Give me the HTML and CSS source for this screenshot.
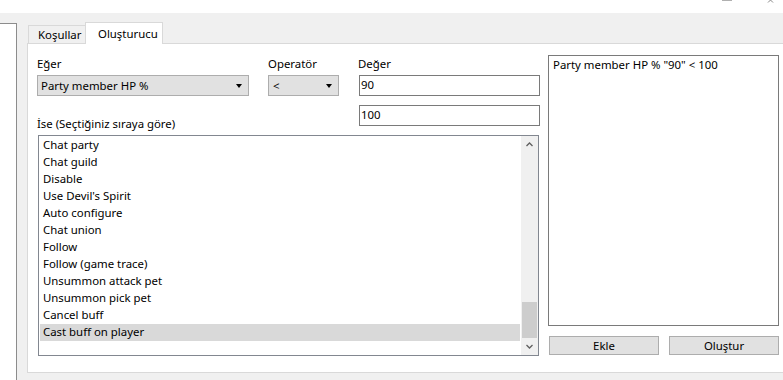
FILE: index.html
```html
<!DOCTYPE html>
<html lang="tr">

<head>
    <meta charset="UTF-8">
    <meta name="viewport" content="width=device-width, initial-scale=1.0">
    <title>Oluşturucu</title>
    <link rel="stylesheet" href="styles.css">
</head>

<body>
    <div class="titlebar">
        <svg class="winctl" width="64" height="13" viewBox="0 0 64 13">
            <rect x="5.5" y="-8.5" width="9" height="9" fill="none" stroke="#b0b0b0" />
            <path d="M51 2.5 L53.5 0 M56 2.5 L53.5 0" stroke="#8a8a8a" stroke-width="1" fill="none" />
        </svg>
    </div>

    <div class="frame">
        <div class="sidebar"></div>

        <div class="tabs">
            <div class="tabstrip">
                <div class="tab">Koşullar</div>
                <div class="tab active">Oluşturucu</div>
            </div>

            <div class="panel">
                <div class="left">
                    <div class="form-grid">
                        <label class="lbl lbl-if">Eğer</label>
                        <label class="lbl lbl-op">Operatör</label>
                        <label class="lbl lbl-val">Değer</label>

                        <div class="combo combo-if">
                            <span>Party member HP %</span>
                            <i class="caret"></i>
                        </div>
                        <div class="combo combo-op">
                            <span>&lt;</span>
                            <i class="caret"></i>
                        </div>
                        <div class="textbox tb-1">90</div>

                        <label class="lbl lbl-then">İse (Seçtiğiniz sıraya göre)</label>
                        <div class="textbox tb-2">100</div>
                    </div>

                    <div class="listbox">
                        <ul class="items">
                            <li>Chat party</li>
                            <li>Chat guild</li>
                            <li>Disable</li>
                            <li>Use Devil's Spirit</li>
                            <li>Auto configure</li>
                            <li>Chat union</li>
                            <li>Follow</li>
                            <li>Follow (game trace)</li>
                            <li>Unsummon attack pet</li>
                            <li>Unsummon pick pet</li>
                            <li>Cancel buff</li>
                            <li class="selected">Cast buff on player</li>
                        </ul>
                        <div class="scrollbar">
                            <div class="sb-btn">
                                <svg width="7" height="5" viewBox="0 0 7 5"><path d="M0.5 4 L3.5 1 L6.5 4" fill="none" stroke="#606060" stroke-width="1.3" /></svg>
                            </div>
                            <div class="sb-track"><div class="sb-thumb"></div></div>
                            <div class="sb-btn">
                                <svg width="7" height="5" viewBox="0 0 7 5"><path d="M0.5 1 L3.5 4 L6.5 1" fill="none" stroke="#606060" stroke-width="1.3" /></svg>
                            </div>
                        </div>
                    </div>
                </div>

                <div class="right">
                    <div class="output">Party member HP % "90" &lt; 100</div>
                    <div class="buttons">
                        <button class="btn">Ekle</button>
                        <button class="btn">Oluştur</button>
                    </div>
                </div>
            </div>
        </div>
    </div>
</body>

</html>
```

FILE: styles.css
```css
* {
    margin: 0;
    padding: 0;
    box-sizing: border-box;
}

body {
    width: 783px;
    height: 380px;
    overflow: hidden;
    background-color: #f0f0f0;
    color: #000;
    font-family: "Noto Sans", "Open Sans", Arial, sans-serif;
    font-size: 11.4px;
    line-height: 16px;
}

.titlebar {
    height: 13px;
    background-color: #fff;
    display: flex;
    justify-content: flex-end;
}

.winctl {
    display: block;
    margin-right: 2px;
}

.frame {
    display: flex;
    height: 367px;
}

.sidebar {
    flex: none;
    width: 17px;
    margin-top: 10px;
    background-color: #fff;
    border-top: 1px solid #8c8c8c;
    border-right: 1px solid #8c8c8c;
}

.tabs {
    flex: none;
    width: 790px;
    margin-left: 10px;
}

/* tab headers */
.tabstrip {
    height: 30px;
    display: flex;
    align-items: flex-end;
    padding-left: 1px;
}

.tab {
    height: 18px;
    width: 58px;
    padding: 1px 0 0 9px;
    background-color: #f0f0f0;
    border: 1px solid #d9d9d9;
    border-bottom: none;
    white-space: nowrap;
}

.tab.active {
    position: relative;
    z-index: 1;
    height: 22px;
    width: 78px;
    margin-left: -1px;
    margin-bottom: -1px;
    padding: 3px 0 0 12px;
    background-color: #fff;
}

.panel {
    height: 330px;
    display: flex;
    padding: 11px 0 0 9px;
    background-color: #fff;
    border: 1px solid #d9d9d9;
}

/* left part: fields and action list */
.left {
    width: 502px;
    margin-top: 1px;
}

.form-grid {
    display: grid;
    grid-template-columns: 212px 71px 182px;
    grid-template-rows: 16px 24px 36px;
}

.lbl {
    display: block;
    white-space: nowrap;
}

.lbl-if {
    grid-column: 1;
}

.lbl-op {
    grid-column: 2;
    margin-left: 19px;
}

.lbl-val {
    grid-column: 3;
    margin-left: 38px;
}

.combo {
    height: 21px;
    margin-top: 3px;
    display: flex;
    align-items: center;
    justify-content: space-between;
    background-color: #e1e1e1;
    border: 1px solid #adadad;
    padding: 0 6px 0 3px;
}

.combo-if {
    grid-column: 1;
    grid-row: 2;
}

.combo-op {
    grid-column: 2;
    grid-row: 2;
    margin-left: 19px;
    width: 71px;
    padding-left: 4px;
}

.caret {
    width: 0;
    height: 0;
    border-left: 3.5px solid transparent;
    border-right: 3.5px solid transparent;
    border-top: 4px solid #000;
}

.textbox {
    height: 21px;
    width: 181px;
    padding: 1px 0 0 1px;
    background-color: #fff;
    border: 1px solid #7a7a7a;
}

.tb-1 {
    grid-column: 3;
    grid-row: 2;
    margin: 3px 0 0 39px;
}

.tb-2 {
    grid-column: 3;
    grid-row: 3;
    margin: 9px 0 0 39px;
}

.lbl-then {
    grid-column: 1 / 3;
    grid-row: 3;
    margin-top: 20px;
}

.listbox {
    display: flex;
    width: 501px;
    height: 221px;
    margin: 3px 0 0 1px;
    border: 1px solid #828790;
    background-color: #fff;
}

.items {
    flex: 1;
    list-style: none;
    padding: 1px 1px 0 1px;
}

.items li {
    height: 17px;
    padding-left: 3px;
    white-space: nowrap;
}

.items li.selected {
    background-color: #d9d9d9;
}

.scrollbar {
    width: 17px;
    display: flex;
    flex-direction: column;
    background-color: #f0f0f0;
}

.sb-btn {
    height: 17px;
    display: flex;
    align-items: center;
    justify-content: center;
}

.sb-btn svg {
    display: block;
}

.sb-track {
    flex: 1;
    display: flex;
    flex-direction: column;
    justify-content: flex-end;
}

.sb-thumb {
    height: 36px;
    margin: 0 1px 0 1px;
    background-color: #cdcdcd;
}

/* right part: result and buttons */
.right {
    width: 231px;
    margin-left: 9px;
}

.output {
    height: 271px;
    padding: 1px 0 0 4px;
    border: 1px solid #7a7a7a;
    white-space: nowrap;
}

.buttons {
    display: flex;
    gap: 10px;
    margin-top: 10px;
    padding-left: 1px;
}

.btn {
    width: 110px;
    height: 19px;
    background-color: #e1e1e1;
    border: 1px solid #adadad;
    font-family: inherit;
    font-size: 11.4px;
    line-height: 16px;
    color: #000;
}
```
